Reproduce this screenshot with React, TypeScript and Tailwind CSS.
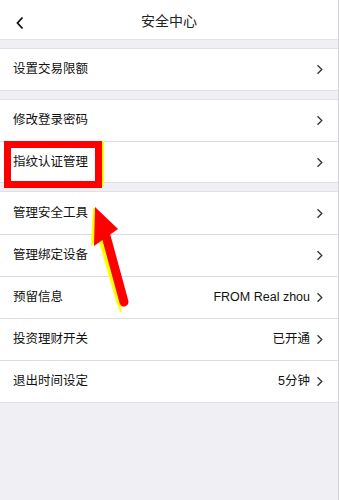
import React from 'react';

type Row = { label: string; value?: string };

const groups: Row[][] = [
  [{ label: '设置交易限额' }],
  [{ label: '修改登录密码' }, { label: '指纹认证管理' }],
  [
    { label: '管理安全工具' },
    { label: '管理绑定设备' },
    { label: '预留信息', value: 'FROM Real zhou' },
    { label: '投资理财开关', value: '已开通' },
    { label: '退出时间设定', value: '5分钟' },
  ],
];

const Chevron: React.FC = () => (
  <svg width="7" height="11" viewBox="0 0 7 11" className="shrink-0">
    <polyline points="1.5,1.2 5.8,5.5 1.5,9.8" fill="none" stroke="#333" strokeWidth="1.3" />
  </svg>
);

const App: React.FC = () => {
  return (
    <div
      className="relative w-[339px] h-[500px] bg-[#efeff4] border-r border-[#d4d4d8] overflow-hidden"
      style={{ fontFamily: '"Liberation Sans", "Noto Sans CJK SC", sans-serif' }}
    >
      {/* header */}
      <div className="relative h-10 bg-white border-b border-[#e2e2e6] flex items-center justify-center">
        <svg width="10" height="14" viewBox="0 0 10 14" className="absolute left-[15px] top-[16px]">
          <polyline points="7.5,1.5 2.5,7 7.5,12.5" fill="none" stroke="#111" strokeWidth="1.8" />
        </svg>
        <span className="text-[14px] text-[#222] mt-1">安全中心</span>
      </div>

      <div className="flex flex-col gap-2 pt-2">
        {groups.map((g, gi) => (
          <div key={gi} className="bg-white border-y border-[#e0e0e4]">
            {g.map((r, ri) => (
              <div
                key={r.label}
                className={`flex items-center justify-between pl-[13px] pr-[15px] ${gi === 2 ? 'h-[42px]' : 'h-[41px]'} ${
                  ri > 0 ? 'border-t border-[#dcdcdf]' : ''
                }`}
              >
                <span className="text-[12.5px] text-[#111]">{r.label}</span>
                <div className="flex items-center gap-[6px]">
                  {r.value && <span className="text-[12.5px] text-[#111]">{r.value}</span>}
                  <Chevron />
                </div>
              </div>
            ))}
          </div>
        ))}
      </div>

      {/* annotation: red box */}
      <div className="absolute left-[4px] top-[141px] w-[98px] h-[47px] border-[7px] border-[#ff0000]" />
      <div className="absolute left-[102px] top-[141px] w-[2px] h-[45px] bg-[#ffff00]" />

      {/* annotation: arrow */}
      <svg className="absolute left-0 top-0 pointer-events-none" width="339" height="500" viewBox="0 0 339 500">
        <line x1="101" y1="242" x2="121" y2="312" stroke="#ffff00" strokeWidth="2" />
        <polygon points="93,207 91,246 116,229" fill="#ffff00" />
        <line x1="104" y1="236" x2="123" y2="302" stroke="#ffff00" strokeWidth="9" strokeLinecap="round" transform="translate(-2,0)" />
        <polygon points="95,207 94,246 118,229" fill="#ff0000" />
        <line x1="106" y1="236" x2="124" y2="302" stroke="#ff0000" strokeWidth="9" strokeLinecap="round" />
      </svg>
    </div>
  );
};

export default App;
